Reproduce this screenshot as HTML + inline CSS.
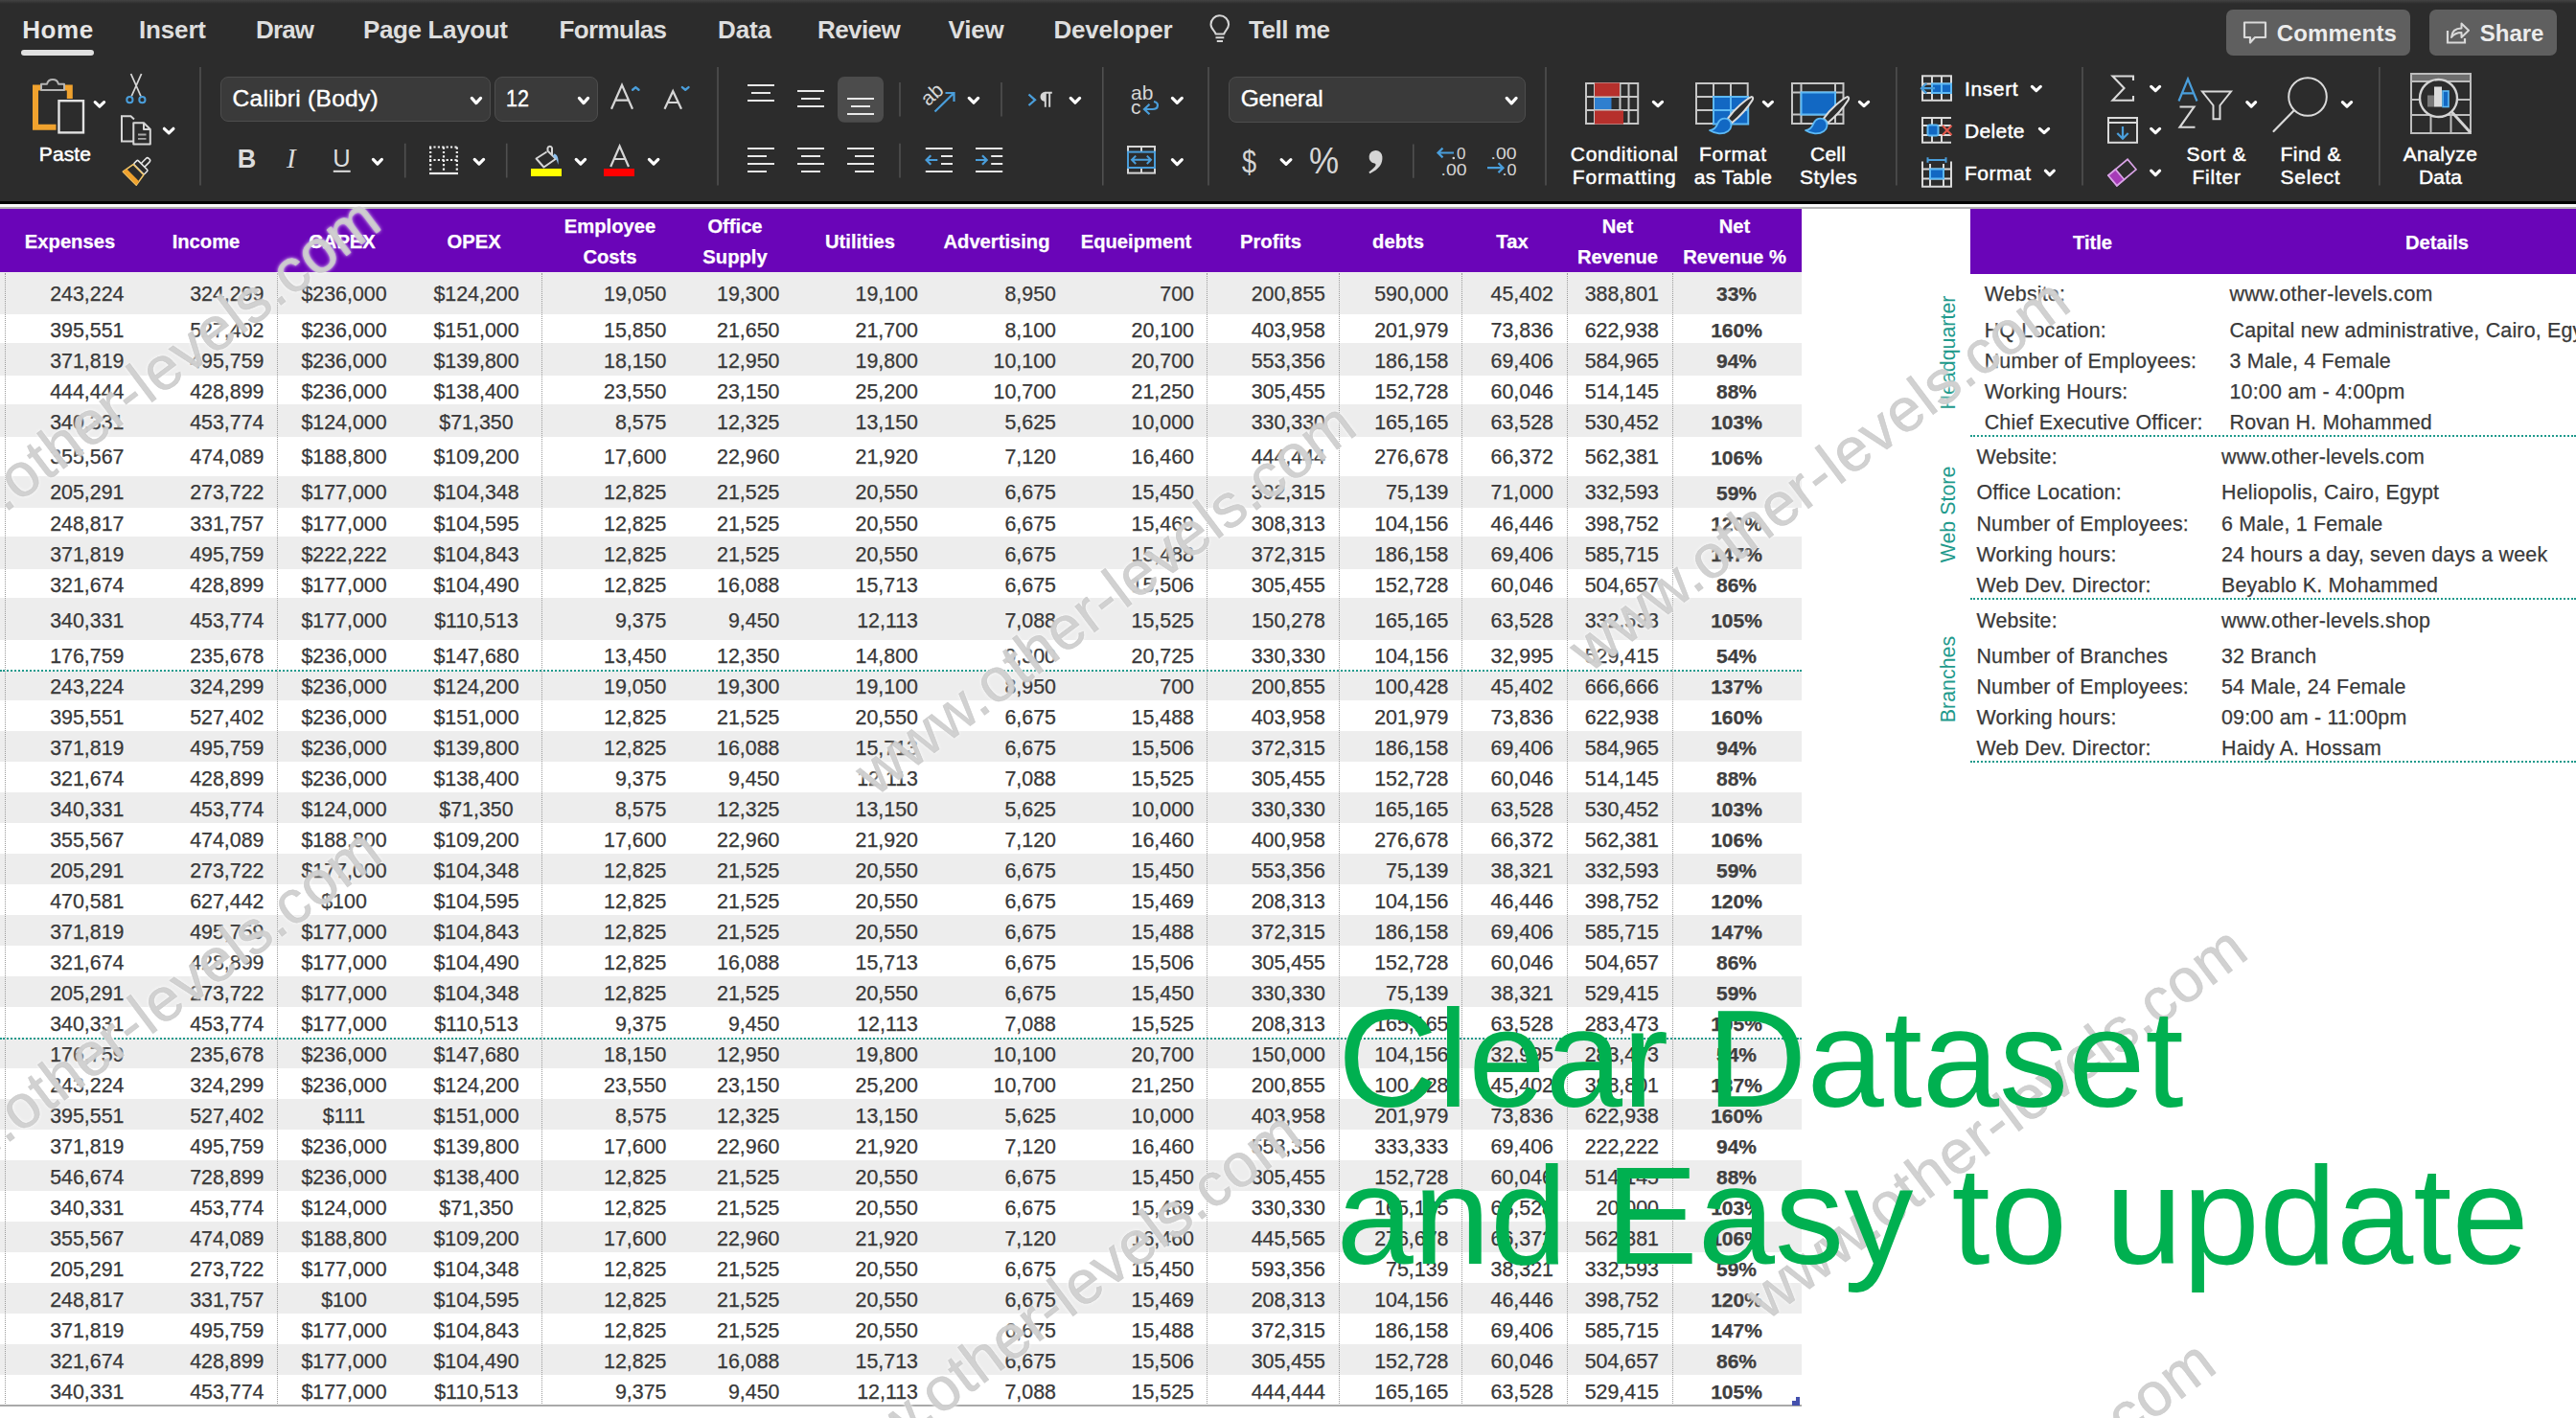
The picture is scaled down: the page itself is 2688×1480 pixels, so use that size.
<!DOCTYPE html>
<html><head><meta charset="utf-8"><title>Excel</title>
<style>
html,body{margin:0;padding:0;width:2688px;height:1480px;overflow:hidden}
#page{position:absolute;left:0;top:0;width:2688px;height:1480px;overflow:hidden;background:#fff}
body{width:2688px;height:1480px;overflow:hidden;position:relative;background:#fff;font-family:"Liberation Sans",sans-serif}
#sheet{position:absolute;left:0;top:0;width:2688px;height:1480px;overflow:hidden}

.ph{position:absolute;background:#6a05b8}
.ht{position:absolute;display:flex;align-items:center;justify-content:center;text-align:center;color:#fff;font-weight:bold;font-size:20.2px;line-height:32px;padding-top:2px;box-sizing:border-box;-webkit-text-stroke:0.25px #fff;white-space:nowrap}
.ht.h2 span{position:relative;top:0px}
.gs{position:absolute;left:0;width:1880px;background:#ededed}
.vd{position:absolute;top:285px;width:0;height:1182px;border-left:1px dotted #9a9a9a}
.td{position:absolute;height:0;border-top:2px dotted #1f9a8c}
.rw{position:absolute;left:0;width:1880px;font-size:21.4px;color:#383838;white-space:nowrap;-webkit-text-stroke:0.25px #383838}
.c{position:absolute;top:0.8px;height:100%}
.c.r{text-align:right}
.c.m{text-align:center}
.c.b{font-weight:bold;font-size:21px;color:#404040}
.rr{position:absolute;left:0;width:2688px;font-size:21.4px;color:#3a3a3a;white-space:nowrap;letter-spacing:0.2px;-webkit-text-stroke:0.25px #383838}
.rr span{position:absolute;top:0.8px}
.vl{position:absolute;width:200px;height:30px;line-height:30px;text-align:center;color:#1f9a8c;font-size:21.4px;transform:rotate(-90deg);white-space:nowrap}


#rb{position:absolute;left:0;top:0;width:2688px;height:218px;background:linear-gradient(#2c2c2c 0,#2c2c2c 209.6px,#000 209.6px,#000 212.6px,#fafafa 212.6px,#fafafa 216px,#b4b4b4 216px,#b4b4b4 218px);overflow:hidden}
#rb:before{content:"";position:absolute;left:0;top:0;width:100%;height:3.5px;background:linear-gradient(#424242,#2c2c2c)}
.rt{position:absolute;line-height:1;white-space:nowrap}
.bx{position:absolute;box-sizing:border-box;background:#3a3a3a;border:1.5px solid #4d4d4d;border-radius:8px}
.btn{position:absolute;background:#5f5f5f;border-radius:7px}


.big{position:absolute;font-size:144.4px;line-height:144.4px;color:#00b050;white-space:nowrap}
.wm{position:absolute;width:700px;height:90px;line-height:90px;text-align:center;font-size:64px;color:rgba(198,198,198,0.8);-webkit-text-stroke:0.6px rgba(198,198,198,0.8);white-space:nowrap;text-shadow:0 0 4px rgba(255,255,255,0.9),0 0 2px rgba(255,255,255,0.7);letter-spacing:0.53px}

</style></head><body>
<div id="page">
<div id="sheet">
<div class="ph" style="left:0;top:218px;width:1880px;height:66px"></div>
<div class="ht" style="left:-27.0px;top:218px;width:200px;height:66px"><span>Expenses</span></div>
<div class="ht" style="left:115.0px;top:218px;width:200px;height:66px"><span>Income</span></div>
<div class="ht" style="left:257.0px;top:218px;width:200px;height:66px"><span>CAPEX</span></div>
<div class="ht" style="left:394.6px;top:218px;width:200px;height:66px"><span>OPEX</span></div>
<div class="ht h2" style="left:536.5px;top:218px;width:200px;height:66px"><span>Employee<br>Costs</span></div>
<div class="ht h2" style="left:667.0px;top:218px;width:200px;height:66px"><span>Office<br>Supply</span></div>
<div class="ht" style="left:797.5px;top:218px;width:200px;height:66px"><span>Utilities</span></div>
<div class="ht" style="left:940.0px;top:218px;width:200px;height:66px"><span>Advertising</span></div>
<div class="ht" style="left:1085.5px;top:218px;width:200px;height:66px"><span>Equeipment</span></div>
<div class="ht" style="left:1226.0px;top:218px;width:200px;height:66px"><span>Profits</span></div>
<div class="ht" style="left:1359.0px;top:218px;width:200px;height:66px"><span>debts</span></div>
<div class="ht" style="left:1478.0px;top:218px;width:200px;height:66px"><span>Tax</span></div>
<div class="ht h2" style="left:1588.0px;top:218px;width:200px;height:66px"><span>Net<br>Revenue</span></div>
<div class="ht h2" style="left:1710.0px;top:218px;width:200px;height:66px"><span>Net<br>Revenue %</span></div>
<div class="gs" style="top:284.0px;height:43.7px"></div>
<div class="gs" style="top:358.0px;height:34.0px"></div>
<div class="gs" style="top:422.0px;height:33.7px"></div>
<div class="gs" style="top:496.7px;height:33.3px"></div>
<div class="gs" style="top:560.0px;height:34.0px"></div>
<div class="gs" style="top:624.0px;height:44.0px"></div>
<div class="gs" style="top:699.5px;height:31.9px"></div>
<div class="gs" style="top:762.6px;height:32.8px"></div>
<div class="gs" style="top:826.6px;height:32.8px"></div>
<div class="gs" style="top:890.6px;height:32.8px"></div>
<div class="gs" style="top:954.6px;height:32.8px"></div>
<div class="gs" style="top:1018.6px;height:32.8px"></div>
<div class="gs" style="top:1082.6px;height:32.8px"></div>
<div class="gs" style="top:1146.6px;height:32.8px"></div>
<div class="gs" style="top:1210.6px;height:32.8px"></div>
<div class="gs" style="top:1274.6px;height:32.8px"></div>
<div class="gs" style="top:1338.6px;height:32.8px"></div>
<div class="gs" style="top:1402.6px;height:32.8px"></div>
<div class="vd" style="left:5px"></div>
<div class="vd" style="left:289px"></div>
<div class="vd" style="left:565px"></div>
<div class="vd" style="left:1259px"></div>
<div class="vd" style="left:1397px"></div>
<div class="vd" style="left:1525px"></div>
<div class="vd" style="left:1635px"></div>
<div class="vd" style="left:1745px"></div>
<div class="td" style="left:0;top:699px;width:1880px"></div>
<div class="td" style="left:0;top:1083px;width:1880px"></div>
<div style="position:absolute;left:0;top:1466px;width:1880px;height:2px;background:#a9a9a9"></div>
<div style="position:absolute;left:1874px;top:1458px;width:4px;height:8.5px;background:#4450ad"></div><div style="position:absolute;left:1870px;top:1462px;width:8px;height:4.5px;background:#4450ad"></div>
<div class="rw" style="top:284px;height:44px;line-height:44px">
<span class="c r" style="left:-10.5px;width:140px">243,224</span>
<span class="c r" style="left:135.5px;width:140px">324,299</span>
<span class="c m" style="left:289px;width:140px">$236,000</span>
<span class="c m" style="left:427px;width:140px">$124,200</span>
<span class="c r" style="left:555.5px;width:140px">19,050</span>
<span class="c r" style="left:673.5px;width:140px">19,300</span>
<span class="c r" style="left:818px;width:140px">19,100</span>
<span class="c r" style="left:962px;width:140px">8,950</span>
<span class="c r" style="left:1106px;width:140px">700</span>
<span class="c r" style="left:1243px;width:140px">200,855</span>
<span class="c r" style="left:1371.5px;width:140px">590,000</span>
<span class="c r" style="left:1481px;width:140px">45,402</span>
<span class="c r" style="left:1591px;width:140px">388,801</span>
<span class="c m b" style="left:1742px;width:140px">33%</span>
</div>
<div class="rw" style="top:328px;height:32px;line-height:32px">
<span class="c r" style="left:-10.5px;width:140px">395,551</span>
<span class="c r" style="left:135.5px;width:140px">527,402</span>
<span class="c m" style="left:289px;width:140px">$236,000</span>
<span class="c m" style="left:427px;width:140px">$151,000</span>
<span class="c r" style="left:555.5px;width:140px">15,850</span>
<span class="c r" style="left:673.5px;width:140px">21,650</span>
<span class="c r" style="left:818px;width:140px">21,700</span>
<span class="c r" style="left:962px;width:140px">8,100</span>
<span class="c r" style="left:1106px;width:140px">20,100</span>
<span class="c r" style="left:1243px;width:140px">403,958</span>
<span class="c r" style="left:1371.5px;width:140px">201,979</span>
<span class="c r" style="left:1481px;width:140px">73,836</span>
<span class="c r" style="left:1591px;width:140px">622,938</span>
<span class="c m b" style="left:1742px;width:140px">160%</span>
</div>
<div class="rw" style="top:360px;height:32px;line-height:32px">
<span class="c r" style="left:-10.5px;width:140px">371,819</span>
<span class="c r" style="left:135.5px;width:140px">495,759</span>
<span class="c m" style="left:289px;width:140px">$236,000</span>
<span class="c m" style="left:427px;width:140px">$139,800</span>
<span class="c r" style="left:555.5px;width:140px">18,150</span>
<span class="c r" style="left:673.5px;width:140px">12,950</span>
<span class="c r" style="left:818px;width:140px">19,800</span>
<span class="c r" style="left:962px;width:140px">10,100</span>
<span class="c r" style="left:1106px;width:140px">20,700</span>
<span class="c r" style="left:1243px;width:140px">553,356</span>
<span class="c r" style="left:1371.5px;width:140px">186,158</span>
<span class="c r" style="left:1481px;width:140px">69,406</span>
<span class="c r" style="left:1591px;width:140px">584,965</span>
<span class="c m b" style="left:1742px;width:140px">94%</span>
</div>
<div class="rw" style="top:392px;height:32px;line-height:32px">
<span class="c r" style="left:-10.5px;width:140px">444,444</span>
<span class="c r" style="left:135.5px;width:140px">428,899</span>
<span class="c m" style="left:289px;width:140px">$236,000</span>
<span class="c m" style="left:427px;width:140px">$138,400</span>
<span class="c r" style="left:555.5px;width:140px">23,550</span>
<span class="c r" style="left:673.5px;width:140px">23,150</span>
<span class="c r" style="left:818px;width:140px">25,200</span>
<span class="c r" style="left:962px;width:140px">10,700</span>
<span class="c r" style="left:1106px;width:140px">21,250</span>
<span class="c r" style="left:1243px;width:140px">305,455</span>
<span class="c r" style="left:1371.5px;width:140px">152,728</span>
<span class="c r" style="left:1481px;width:140px">60,046</span>
<span class="c r" style="left:1591px;width:140px">514,145</span>
<span class="c m b" style="left:1742px;width:140px">88%</span>
</div>
<div class="rw" style="top:424px;height:32px;line-height:32px">
<span class="c r" style="left:-10.5px;width:140px">340,331</span>
<span class="c r" style="left:135.5px;width:140px">453,774</span>
<span class="c m" style="left:289px;width:140px">$124,000</span>
<span class="c m" style="left:427px;width:140px">$71,350</span>
<span class="c r" style="left:555.5px;width:140px">8,575</span>
<span class="c r" style="left:673.5px;width:140px">12,325</span>
<span class="c r" style="left:818px;width:140px">13,150</span>
<span class="c r" style="left:962px;width:140px">5,625</span>
<span class="c r" style="left:1106px;width:140px">10,000</span>
<span class="c r" style="left:1243px;width:140px">330,330</span>
<span class="c r" style="left:1371.5px;width:140px">165,165</span>
<span class="c r" style="left:1481px;width:140px">63,528</span>
<span class="c r" style="left:1591px;width:140px">530,452</span>
<span class="c m b" style="left:1742px;width:140px">103%</span>
</div>
<div class="rw" style="top:456px;height:41px;line-height:41px">
<span class="c r" style="left:-10.5px;width:140px">355,567</span>
<span class="c r" style="left:135.5px;width:140px">474,089</span>
<span class="c m" style="left:289px;width:140px">$188,800</span>
<span class="c m" style="left:427px;width:140px">$109,200</span>
<span class="c r" style="left:555.5px;width:140px">17,600</span>
<span class="c r" style="left:673.5px;width:140px">22,960</span>
<span class="c r" style="left:818px;width:140px">21,920</span>
<span class="c r" style="left:962px;width:140px">7,120</span>
<span class="c r" style="left:1106px;width:140px">16,460</span>
<span class="c r" style="left:1243px;width:140px">444,444</span>
<span class="c r" style="left:1371.5px;width:140px">276,678</span>
<span class="c r" style="left:1481px;width:140px">66,372</span>
<span class="c r" style="left:1591px;width:140px">562,381</span>
<span class="c m b" style="left:1742px;width:140px">106%</span>
</div>
<div class="rw" style="top:497px;height:33px;line-height:33px">
<span class="c r" style="left:-10.5px;width:140px">205,291</span>
<span class="c r" style="left:135.5px;width:140px">273,722</span>
<span class="c m" style="left:289px;width:140px">$177,000</span>
<span class="c m" style="left:427px;width:140px">$104,348</span>
<span class="c r" style="left:555.5px;width:140px">12,825</span>
<span class="c r" style="left:673.5px;width:140px">21,525</span>
<span class="c r" style="left:818px;width:140px">20,550</span>
<span class="c r" style="left:962px;width:140px">6,675</span>
<span class="c r" style="left:1106px;width:140px">15,450</span>
<span class="c r" style="left:1243px;width:140px">392,315</span>
<span class="c r" style="left:1371.5px;width:140px">75,139</span>
<span class="c r" style="left:1481px;width:140px">71,000</span>
<span class="c r" style="left:1591px;width:140px">332,593</span>
<span class="c m b" style="left:1742px;width:140px">59%</span>
</div>
<div class="rw" style="top:530px;height:32px;line-height:32px">
<span class="c r" style="left:-10.5px;width:140px">248,817</span>
<span class="c r" style="left:135.5px;width:140px">331,757</span>
<span class="c m" style="left:289px;width:140px">$177,000</span>
<span class="c m" style="left:427px;width:140px">$104,595</span>
<span class="c r" style="left:555.5px;width:140px">12,825</span>
<span class="c r" style="left:673.5px;width:140px">21,525</span>
<span class="c r" style="left:818px;width:140px">20,550</span>
<span class="c r" style="left:962px;width:140px">6,675</span>
<span class="c r" style="left:1106px;width:140px">15,469</span>
<span class="c r" style="left:1243px;width:140px">308,313</span>
<span class="c r" style="left:1371.5px;width:140px">104,156</span>
<span class="c r" style="left:1481px;width:140px">46,446</span>
<span class="c r" style="left:1591px;width:140px">398,752</span>
<span class="c m b" style="left:1742px;width:140px">120%</span>
</div>
<div class="rw" style="top:562px;height:32px;line-height:32px">
<span class="c r" style="left:-10.5px;width:140px">371,819</span>
<span class="c r" style="left:135.5px;width:140px">495,759</span>
<span class="c m" style="left:289px;width:140px">$222,222</span>
<span class="c m" style="left:427px;width:140px">$104,843</span>
<span class="c r" style="left:555.5px;width:140px">12,825</span>
<span class="c r" style="left:673.5px;width:140px">21,525</span>
<span class="c r" style="left:818px;width:140px">20,550</span>
<span class="c r" style="left:962px;width:140px">6,675</span>
<span class="c r" style="left:1106px;width:140px">15,488</span>
<span class="c r" style="left:1243px;width:140px">372,315</span>
<span class="c r" style="left:1371.5px;width:140px">186,158</span>
<span class="c r" style="left:1481px;width:140px">69,406</span>
<span class="c r" style="left:1591px;width:140px">585,715</span>
<span class="c m b" style="left:1742px;width:140px">147%</span>
</div>
<div class="rw" style="top:594px;height:32px;line-height:32px">
<span class="c r" style="left:-10.5px;width:140px">321,674</span>
<span class="c r" style="left:135.5px;width:140px">428,899</span>
<span class="c m" style="left:289px;width:140px">$177,000</span>
<span class="c m" style="left:427px;width:140px">$104,490</span>
<span class="c r" style="left:555.5px;width:140px">12,825</span>
<span class="c r" style="left:673.5px;width:140px">16,088</span>
<span class="c r" style="left:818px;width:140px">15,713</span>
<span class="c r" style="left:962px;width:140px">6,675</span>
<span class="c r" style="left:1106px;width:140px">15,506</span>
<span class="c r" style="left:1243px;width:140px">305,455</span>
<span class="c r" style="left:1371.5px;width:140px">152,728</span>
<span class="c r" style="left:1481px;width:140px">60,046</span>
<span class="c r" style="left:1591px;width:140px">504,657</span>
<span class="c m b" style="left:1742px;width:140px">86%</span>
</div>
<div class="rw" style="top:626px;height:42px;line-height:42px">
<span class="c r" style="left:-10.5px;width:140px">340,331</span>
<span class="c r" style="left:135.5px;width:140px">453,774</span>
<span class="c m" style="left:289px;width:140px">$177,000</span>
<span class="c m" style="left:427px;width:140px">$110,513</span>
<span class="c r" style="left:555.5px;width:140px">9,375</span>
<span class="c r" style="left:673.5px;width:140px">9,450</span>
<span class="c r" style="left:818px;width:140px">12,113</span>
<span class="c r" style="left:962px;width:140px">7,088</span>
<span class="c r" style="left:1106px;width:140px">15,525</span>
<span class="c r" style="left:1243px;width:140px">150,278</span>
<span class="c r" style="left:1371.5px;width:140px">165,165</span>
<span class="c r" style="left:1481px;width:140px">63,528</span>
<span class="c r" style="left:1591px;width:140px">332,593</span>
<span class="c m b" style="left:1742px;width:140px">105%</span>
</div>
<div class="rw" style="top:668px;height:32px;line-height:32px">
<span class="c r" style="left:-10.5px;width:140px">176,759</span>
<span class="c r" style="left:135.5px;width:140px">235,678</span>
<span class="c m" style="left:289px;width:140px">$236,000</span>
<span class="c m" style="left:427px;width:140px">$147,680</span>
<span class="c r" style="left:555.5px;width:140px">13,450</span>
<span class="c r" style="left:673.5px;width:140px">12,350</span>
<span class="c r" style="left:818px;width:140px">14,800</span>
<span class="c r" style="left:962px;width:140px">9,300</span>
<span class="c r" style="left:1106px;width:140px">20,725</span>
<span class="c r" style="left:1243px;width:140px">330,330</span>
<span class="c r" style="left:1371.5px;width:140px">104,156</span>
<span class="c r" style="left:1481px;width:140px">32,995</span>
<span class="c r" style="left:1591px;width:140px">529,415</span>
<span class="c m b" style="left:1742px;width:140px">54%</span>
</div>
<div class="rw" style="top:700px;height:32px;line-height:32px">
<span class="c r" style="left:-10.5px;width:140px">243,224</span>
<span class="c r" style="left:135.5px;width:140px">324,299</span>
<span class="c m" style="left:289px;width:140px">$236,000</span>
<span class="c m" style="left:427px;width:140px">$124,200</span>
<span class="c r" style="left:555.5px;width:140px">19,050</span>
<span class="c r" style="left:673.5px;width:140px">19,300</span>
<span class="c r" style="left:818px;width:140px">19,100</span>
<span class="c r" style="left:962px;width:140px">8,950</span>
<span class="c r" style="left:1106px;width:140px">700</span>
<span class="c r" style="left:1243px;width:140px">200,855</span>
<span class="c r" style="left:1371.5px;width:140px">100,428</span>
<span class="c r" style="left:1481px;width:140px">45,402</span>
<span class="c r" style="left:1591px;width:140px">666,666</span>
<span class="c m b" style="left:1742px;width:140px">137%</span>
</div>
<div class="rw" style="top:732px;height:32px;line-height:32px">
<span class="c r" style="left:-10.5px;width:140px">395,551</span>
<span class="c r" style="left:135.5px;width:140px">527,402</span>
<span class="c m" style="left:289px;width:140px">$236,000</span>
<span class="c m" style="left:427px;width:140px">$151,000</span>
<span class="c r" style="left:555.5px;width:140px">12,825</span>
<span class="c r" style="left:673.5px;width:140px">21,525</span>
<span class="c r" style="left:818px;width:140px">20,550</span>
<span class="c r" style="left:962px;width:140px">6,675</span>
<span class="c r" style="left:1106px;width:140px">15,488</span>
<span class="c r" style="left:1243px;width:140px">403,958</span>
<span class="c r" style="left:1371.5px;width:140px">201,979</span>
<span class="c r" style="left:1481px;width:140px">73,836</span>
<span class="c r" style="left:1591px;width:140px">622,938</span>
<span class="c m b" style="left:1742px;width:140px">160%</span>
</div>
<div class="rw" style="top:764px;height:32px;line-height:32px">
<span class="c r" style="left:-10.5px;width:140px">371,819</span>
<span class="c r" style="left:135.5px;width:140px">495,759</span>
<span class="c m" style="left:289px;width:140px">$236,000</span>
<span class="c m" style="left:427px;width:140px">$139,800</span>
<span class="c r" style="left:555.5px;width:140px">12,825</span>
<span class="c r" style="left:673.5px;width:140px">16,088</span>
<span class="c r" style="left:818px;width:140px">15,713</span>
<span class="c r" style="left:962px;width:140px">6,675</span>
<span class="c r" style="left:1106px;width:140px">15,506</span>
<span class="c r" style="left:1243px;width:140px">372,315</span>
<span class="c r" style="left:1371.5px;width:140px">186,158</span>
<span class="c r" style="left:1481px;width:140px">69,406</span>
<span class="c r" style="left:1591px;width:140px">584,965</span>
<span class="c m b" style="left:1742px;width:140px">94%</span>
</div>
<div class="rw" style="top:796px;height:32px;line-height:32px">
<span class="c r" style="left:-10.5px;width:140px">321,674</span>
<span class="c r" style="left:135.5px;width:140px">428,899</span>
<span class="c m" style="left:289px;width:140px">$236,000</span>
<span class="c m" style="left:427px;width:140px">$138,400</span>
<span class="c r" style="left:555.5px;width:140px">9,375</span>
<span class="c r" style="left:673.5px;width:140px">9,450</span>
<span class="c r" style="left:818px;width:140px">12,113</span>
<span class="c r" style="left:962px;width:140px">7,088</span>
<span class="c r" style="left:1106px;width:140px">15,525</span>
<span class="c r" style="left:1243px;width:140px">305,455</span>
<span class="c r" style="left:1371.5px;width:140px">152,728</span>
<span class="c r" style="left:1481px;width:140px">60,046</span>
<span class="c r" style="left:1591px;width:140px">514,145</span>
<span class="c m b" style="left:1742px;width:140px">88%</span>
</div>
<div class="rw" style="top:828px;height:32px;line-height:32px">
<span class="c r" style="left:-10.5px;width:140px">340,331</span>
<span class="c r" style="left:135.5px;width:140px">453,774</span>
<span class="c m" style="left:289px;width:140px">$124,000</span>
<span class="c m" style="left:427px;width:140px">$71,350</span>
<span class="c r" style="left:555.5px;width:140px">8,575</span>
<span class="c r" style="left:673.5px;width:140px">12,325</span>
<span class="c r" style="left:818px;width:140px">13,150</span>
<span class="c r" style="left:962px;width:140px">5,625</span>
<span class="c r" style="left:1106px;width:140px">10,000</span>
<span class="c r" style="left:1243px;width:140px">330,330</span>
<span class="c r" style="left:1371.5px;width:140px">165,165</span>
<span class="c r" style="left:1481px;width:140px">63,528</span>
<span class="c r" style="left:1591px;width:140px">530,452</span>
<span class="c m b" style="left:1742px;width:140px">103%</span>
</div>
<div class="rw" style="top:860px;height:32px;line-height:32px">
<span class="c r" style="left:-10.5px;width:140px">355,567</span>
<span class="c r" style="left:135.5px;width:140px">474,089</span>
<span class="c m" style="left:289px;width:140px">$188,800</span>
<span class="c m" style="left:427px;width:140px">$109,200</span>
<span class="c r" style="left:555.5px;width:140px">17,600</span>
<span class="c r" style="left:673.5px;width:140px">22,960</span>
<span class="c r" style="left:818px;width:140px">21,920</span>
<span class="c r" style="left:962px;width:140px">7,120</span>
<span class="c r" style="left:1106px;width:140px">16,460</span>
<span class="c r" style="left:1243px;width:140px">400,958</span>
<span class="c r" style="left:1371.5px;width:140px">276,678</span>
<span class="c r" style="left:1481px;width:140px">66,372</span>
<span class="c r" style="left:1591px;width:140px">562,381</span>
<span class="c m b" style="left:1742px;width:140px">106%</span>
</div>
<div class="rw" style="top:892px;height:32px;line-height:32px">
<span class="c r" style="left:-10.5px;width:140px">205,291</span>
<span class="c r" style="left:135.5px;width:140px">273,722</span>
<span class="c m" style="left:289px;width:140px">$177,000</span>
<span class="c m" style="left:427px;width:140px">$104,348</span>
<span class="c r" style="left:555.5px;width:140px">12,825</span>
<span class="c r" style="left:673.5px;width:140px">21,525</span>
<span class="c r" style="left:818px;width:140px">20,550</span>
<span class="c r" style="left:962px;width:140px">6,675</span>
<span class="c r" style="left:1106px;width:140px">15,450</span>
<span class="c r" style="left:1243px;width:140px">553,356</span>
<span class="c r" style="left:1371.5px;width:140px">75,139</span>
<span class="c r" style="left:1481px;width:140px">38,321</span>
<span class="c r" style="left:1591px;width:140px">332,593</span>
<span class="c m b" style="left:1742px;width:140px">59%</span>
</div>
<div class="rw" style="top:924px;height:32px;line-height:32px">
<span class="c r" style="left:-10.5px;width:140px">470,581</span>
<span class="c r" style="left:135.5px;width:140px">627,442</span>
<span class="c m" style="left:289px;width:140px">$100</span>
<span class="c m" style="left:427px;width:140px">$104,595</span>
<span class="c r" style="left:555.5px;width:140px">12,825</span>
<span class="c r" style="left:673.5px;width:140px">21,525</span>
<span class="c r" style="left:818px;width:140px">20,550</span>
<span class="c r" style="left:962px;width:140px">6,675</span>
<span class="c r" style="left:1106px;width:140px">15,469</span>
<span class="c r" style="left:1243px;width:140px">208,313</span>
<span class="c r" style="left:1371.5px;width:140px">104,156</span>
<span class="c r" style="left:1481px;width:140px">46,446</span>
<span class="c r" style="left:1591px;width:140px">398,752</span>
<span class="c m b" style="left:1742px;width:140px">120%</span>
</div>
<div class="rw" style="top:956px;height:32px;line-height:32px">
<span class="c r" style="left:-10.5px;width:140px">371,819</span>
<span class="c r" style="left:135.5px;width:140px">495,759</span>
<span class="c m" style="left:289px;width:140px">$177,000</span>
<span class="c m" style="left:427px;width:140px">$104,843</span>
<span class="c r" style="left:555.5px;width:140px">12,825</span>
<span class="c r" style="left:673.5px;width:140px">21,525</span>
<span class="c r" style="left:818px;width:140px">20,550</span>
<span class="c r" style="left:962px;width:140px">6,675</span>
<span class="c r" style="left:1106px;width:140px">15,488</span>
<span class="c r" style="left:1243px;width:140px">372,315</span>
<span class="c r" style="left:1371.5px;width:140px">186,158</span>
<span class="c r" style="left:1481px;width:140px">69,406</span>
<span class="c r" style="left:1591px;width:140px">585,715</span>
<span class="c m b" style="left:1742px;width:140px">147%</span>
</div>
<div class="rw" style="top:988px;height:32px;line-height:32px">
<span class="c r" style="left:-10.5px;width:140px">321,674</span>
<span class="c r" style="left:135.5px;width:140px">428,899</span>
<span class="c m" style="left:289px;width:140px">$177,000</span>
<span class="c m" style="left:427px;width:140px">$104,490</span>
<span class="c r" style="left:555.5px;width:140px">12,825</span>
<span class="c r" style="left:673.5px;width:140px">16,088</span>
<span class="c r" style="left:818px;width:140px">15,713</span>
<span class="c r" style="left:962px;width:140px">6,675</span>
<span class="c r" style="left:1106px;width:140px">15,506</span>
<span class="c r" style="left:1243px;width:140px">305,455</span>
<span class="c r" style="left:1371.5px;width:140px">152,728</span>
<span class="c r" style="left:1481px;width:140px">60,046</span>
<span class="c r" style="left:1591px;width:140px">504,657</span>
<span class="c m b" style="left:1742px;width:140px">86%</span>
</div>
<div class="rw" style="top:1020px;height:32px;line-height:32px">
<span class="c r" style="left:-10.5px;width:140px">205,291</span>
<span class="c r" style="left:135.5px;width:140px">273,722</span>
<span class="c m" style="left:289px;width:140px">$177,000</span>
<span class="c m" style="left:427px;width:140px">$104,348</span>
<span class="c r" style="left:555.5px;width:140px">12,825</span>
<span class="c r" style="left:673.5px;width:140px">21,525</span>
<span class="c r" style="left:818px;width:140px">20,550</span>
<span class="c r" style="left:962px;width:140px">6,675</span>
<span class="c r" style="left:1106px;width:140px">15,450</span>
<span class="c r" style="left:1243px;width:140px">330,330</span>
<span class="c r" style="left:1371.5px;width:140px">75,139</span>
<span class="c r" style="left:1481px;width:140px">38,321</span>
<span class="c r" style="left:1591px;width:140px">529,415</span>
<span class="c m b" style="left:1742px;width:140px">59%</span>
</div>
<div class="rw" style="top:1052px;height:32px;line-height:32px">
<span class="c r" style="left:-10.5px;width:140px">340,331</span>
<span class="c r" style="left:135.5px;width:140px">453,774</span>
<span class="c m" style="left:289px;width:140px">$177,000</span>
<span class="c m" style="left:427px;width:140px">$110,513</span>
<span class="c r" style="left:555.5px;width:140px">9,375</span>
<span class="c r" style="left:673.5px;width:140px">9,450</span>
<span class="c r" style="left:818px;width:140px">12,113</span>
<span class="c r" style="left:962px;width:140px">7,088</span>
<span class="c r" style="left:1106px;width:140px">15,525</span>
<span class="c r" style="left:1243px;width:140px">208,313</span>
<span class="c r" style="left:1371.5px;width:140px">165,165</span>
<span class="c r" style="left:1481px;width:140px">63,528</span>
<span class="c r" style="left:1591px;width:140px">283,473</span>
<span class="c m b" style="left:1742px;width:140px">105%</span>
</div>
<div class="rw" style="top:1084px;height:32px;line-height:32px">
<span class="c r" style="left:-10.5px;width:140px">176,759</span>
<span class="c r" style="left:135.5px;width:140px">235,678</span>
<span class="c m" style="left:289px;width:140px">$236,000</span>
<span class="c m" style="left:427px;width:140px">$147,680</span>
<span class="c r" style="left:555.5px;width:140px">18,150</span>
<span class="c r" style="left:673.5px;width:140px">12,950</span>
<span class="c r" style="left:818px;width:140px">19,800</span>
<span class="c r" style="left:962px;width:140px">10,100</span>
<span class="c r" style="left:1106px;width:140px">20,700</span>
<span class="c r" style="left:1243px;width:140px">150,000</span>
<span class="c r" style="left:1371.5px;width:140px">104,156</span>
<span class="c r" style="left:1481px;width:140px">32,995</span>
<span class="c r" style="left:1591px;width:140px">283,473</span>
<span class="c m b" style="left:1742px;width:140px">54%</span>
</div>
<div class="rw" style="top:1116px;height:32px;line-height:32px">
<span class="c r" style="left:-10.5px;width:140px">243,224</span>
<span class="c r" style="left:135.5px;width:140px">324,299</span>
<span class="c m" style="left:289px;width:140px">$236,000</span>
<span class="c m" style="left:427px;width:140px">$124,200</span>
<span class="c r" style="left:555.5px;width:140px">23,550</span>
<span class="c r" style="left:673.5px;width:140px">23,150</span>
<span class="c r" style="left:818px;width:140px">25,200</span>
<span class="c r" style="left:962px;width:140px">10,700</span>
<span class="c r" style="left:1106px;width:140px">21,250</span>
<span class="c r" style="left:1243px;width:140px">200,855</span>
<span class="c r" style="left:1371.5px;width:140px">100,428</span>
<span class="c r" style="left:1481px;width:140px">45,402</span>
<span class="c r" style="left:1591px;width:140px">388,801</span>
<span class="c m b" style="left:1742px;width:140px">137%</span>
</div>
<div class="rw" style="top:1148px;height:32px;line-height:32px">
<span class="c r" style="left:-10.5px;width:140px">395,551</span>
<span class="c r" style="left:135.5px;width:140px">527,402</span>
<span class="c m" style="left:289px;width:140px">$111</span>
<span class="c m" style="left:427px;width:140px">$151,000</span>
<span class="c r" style="left:555.5px;width:140px">8,575</span>
<span class="c r" style="left:673.5px;width:140px">12,325</span>
<span class="c r" style="left:818px;width:140px">13,150</span>
<span class="c r" style="left:962px;width:140px">5,625</span>
<span class="c r" style="left:1106px;width:140px">10,000</span>
<span class="c r" style="left:1243px;width:140px">403,958</span>
<span class="c r" style="left:1371.5px;width:140px">201,979</span>
<span class="c r" style="left:1481px;width:140px">73,836</span>
<span class="c r" style="left:1591px;width:140px">622,938</span>
<span class="c m b" style="left:1742px;width:140px">160%</span>
</div>
<div class="rw" style="top:1180px;height:32px;line-height:32px">
<span class="c r" style="left:-10.5px;width:140px">371,819</span>
<span class="c r" style="left:135.5px;width:140px">495,759</span>
<span class="c m" style="left:289px;width:140px">$236,000</span>
<span class="c m" style="left:427px;width:140px">$139,800</span>
<span class="c r" style="left:555.5px;width:140px">17,600</span>
<span class="c r" style="left:673.5px;width:140px">22,960</span>
<span class="c r" style="left:818px;width:140px">21,920</span>
<span class="c r" style="left:962px;width:140px">7,120</span>
<span class="c r" style="left:1106px;width:140px">16,460</span>
<span class="c r" style="left:1243px;width:140px">553,356</span>
<span class="c r" style="left:1371.5px;width:140px">333,333</span>
<span class="c r" style="left:1481px;width:140px">69,406</span>
<span class="c r" style="left:1591px;width:140px">222,222</span>
<span class="c m b" style="left:1742px;width:140px">94%</span>
</div>
<div class="rw" style="top:1212px;height:32px;line-height:32px">
<span class="c r" style="left:-10.5px;width:140px">546,674</span>
<span class="c r" style="left:135.5px;width:140px">728,899</span>
<span class="c m" style="left:289px;width:140px">$236,000</span>
<span class="c m" style="left:427px;width:140px">$138,400</span>
<span class="c r" style="left:555.5px;width:140px">12,825</span>
<span class="c r" style="left:673.5px;width:140px">21,525</span>
<span class="c r" style="left:818px;width:140px">20,550</span>
<span class="c r" style="left:962px;width:140px">6,675</span>
<span class="c r" style="left:1106px;width:140px">15,450</span>
<span class="c r" style="left:1243px;width:140px">305,455</span>
<span class="c r" style="left:1371.5px;width:140px">152,728</span>
<span class="c r" style="left:1481px;width:140px">60,046</span>
<span class="c r" style="left:1591px;width:140px">514,145</span>
<span class="c m b" style="left:1742px;width:140px">88%</span>
</div>
<div class="rw" style="top:1244px;height:32px;line-height:32px">
<span class="c r" style="left:-10.5px;width:140px">340,331</span>
<span class="c r" style="left:135.5px;width:140px">453,774</span>
<span class="c m" style="left:289px;width:140px">$124,000</span>
<span class="c m" style="left:427px;width:140px">$71,350</span>
<span class="c r" style="left:555.5px;width:140px">12,825</span>
<span class="c r" style="left:673.5px;width:140px">21,525</span>
<span class="c r" style="left:818px;width:140px">20,550</span>
<span class="c r" style="left:962px;width:140px">6,675</span>
<span class="c r" style="left:1106px;width:140px">15,469</span>
<span class="c r" style="left:1243px;width:140px">330,330</span>
<span class="c r" style="left:1371.5px;width:140px">165,165</span>
<span class="c r" style="left:1481px;width:140px">63,528</span>
<span class="c r" style="left:1591px;width:140px">20,000</span>
<span class="c m b" style="left:1742px;width:140px">103%</span>
</div>
<div class="rw" style="top:1276px;height:32px;line-height:32px">
<span class="c r" style="left:-10.5px;width:140px">355,567</span>
<span class="c r" style="left:135.5px;width:140px">474,089</span>
<span class="c m" style="left:289px;width:140px">$188,800</span>
<span class="c m" style="left:427px;width:140px">$109,200</span>
<span class="c r" style="left:555.5px;width:140px">17,600</span>
<span class="c r" style="left:673.5px;width:140px">22,960</span>
<span class="c r" style="left:818px;width:140px">21,920</span>
<span class="c r" style="left:962px;width:140px">7,120</span>
<span class="c r" style="left:1106px;width:140px">16,460</span>
<span class="c r" style="left:1243px;width:140px">445,565</span>
<span class="c r" style="left:1371.5px;width:140px">276,678</span>
<span class="c r" style="left:1481px;width:140px">66,372</span>
<span class="c r" style="left:1591px;width:140px">562,381</span>
<span class="c m b" style="left:1742px;width:140px">106%</span>
</div>
<div class="rw" style="top:1308px;height:32px;line-height:32px">
<span class="c r" style="left:-10.5px;width:140px">205,291</span>
<span class="c r" style="left:135.5px;width:140px">273,722</span>
<span class="c m" style="left:289px;width:140px">$177,000</span>
<span class="c m" style="left:427px;width:140px">$104,348</span>
<span class="c r" style="left:555.5px;width:140px">12,825</span>
<span class="c r" style="left:673.5px;width:140px">21,525</span>
<span class="c r" style="left:818px;width:140px">20,550</span>
<span class="c r" style="left:962px;width:140px">6,675</span>
<span class="c r" style="left:1106px;width:140px">15,450</span>
<span class="c r" style="left:1243px;width:140px">593,356</span>
<span class="c r" style="left:1371.5px;width:140px">75,139</span>
<span class="c r" style="left:1481px;width:140px">38,321</span>
<span class="c r" style="left:1591px;width:140px">332,593</span>
<span class="c m b" style="left:1742px;width:140px">59%</span>
</div>
<div class="rw" style="top:1340px;height:32px;line-height:32px">
<span class="c r" style="left:-10.5px;width:140px">248,817</span>
<span class="c r" style="left:135.5px;width:140px">331,757</span>
<span class="c m" style="left:289px;width:140px">$100</span>
<span class="c m" style="left:427px;width:140px">$104,595</span>
<span class="c r" style="left:555.5px;width:140px">12,825</span>
<span class="c r" style="left:673.5px;width:140px">21,525</span>
<span class="c r" style="left:818px;width:140px">20,550</span>
<span class="c r" style="left:962px;width:140px">6,675</span>
<span class="c r" style="left:1106px;width:140px">15,469</span>
<span class="c r" style="left:1243px;width:140px">208,313</span>
<span class="c r" style="left:1371.5px;width:140px">104,156</span>
<span class="c r" style="left:1481px;width:140px">46,446</span>
<span class="c r" style="left:1591px;width:140px">398,752</span>
<span class="c m b" style="left:1742px;width:140px">120%</span>
</div>
<div class="rw" style="top:1372px;height:32px;line-height:32px">
<span class="c r" style="left:-10.5px;width:140px">371,819</span>
<span class="c r" style="left:135.5px;width:140px">495,759</span>
<span class="c m" style="left:289px;width:140px">$177,000</span>
<span class="c m" style="left:427px;width:140px">$104,843</span>
<span class="c r" style="left:555.5px;width:140px">12,825</span>
<span class="c r" style="left:673.5px;width:140px">21,525</span>
<span class="c r" style="left:818px;width:140px">20,550</span>
<span class="c r" style="left:962px;width:140px">6,675</span>
<span class="c r" style="left:1106px;width:140px">15,488</span>
<span class="c r" style="left:1243px;width:140px">372,315</span>
<span class="c r" style="left:1371.5px;width:140px">186,158</span>
<span class="c r" style="left:1481px;width:140px">69,406</span>
<span class="c r" style="left:1591px;width:140px">585,715</span>
<span class="c m b" style="left:1742px;width:140px">147%</span>
</div>
<div class="rw" style="top:1404px;height:32px;line-height:32px">
<span class="c r" style="left:-10.5px;width:140px">321,674</span>
<span class="c r" style="left:135.5px;width:140px">428,899</span>
<span class="c m" style="left:289px;width:140px">$177,000</span>
<span class="c m" style="left:427px;width:140px">$104,490</span>
<span class="c r" style="left:555.5px;width:140px">12,825</span>
<span class="c r" style="left:673.5px;width:140px">16,088</span>
<span class="c r" style="left:818px;width:140px">15,713</span>
<span class="c r" style="left:962px;width:140px">6,675</span>
<span class="c r" style="left:1106px;width:140px">15,506</span>
<span class="c r" style="left:1243px;width:140px">305,455</span>
<span class="c r" style="left:1371.5px;width:140px">152,728</span>
<span class="c r" style="left:1481px;width:140px">60,046</span>
<span class="c r" style="left:1591px;width:140px">504,657</span>
<span class="c m b" style="left:1742px;width:140px">86%</span>
</div>
<div class="rw" style="top:1436px;height:32px;line-height:32px">
<span class="c r" style="left:-10.5px;width:140px">340,331</span>
<span class="c r" style="left:135.5px;width:140px">453,774</span>
<span class="c m" style="left:289px;width:140px">$177,000</span>
<span class="c m" style="left:427px;width:140px">$110,513</span>
<span class="c r" style="left:555.5px;width:140px">9,375</span>
<span class="c r" style="left:673.5px;width:140px">9,450</span>
<span class="c r" style="left:818px;width:140px">12,113</span>
<span class="c r" style="left:962px;width:140px">7,088</span>
<span class="c r" style="left:1106px;width:140px">15,525</span>
<span class="c r" style="left:1243px;width:140px">444,444</span>
<span class="c r" style="left:1371.5px;width:140px">165,165</span>
<span class="c r" style="left:1481px;width:140px">63,528</span>
<span class="c r" style="left:1591px;width:140px">529,415</span>
<span class="c m b" style="left:1742px;width:140px">105%</span>
</div>
<div class="ph" style="left:2056px;top:218px;width:632px;height:68px"></div>
<div class="ht" style="left:2083.5px;top:218px;width:200px;height:68px"><span>Title</span></div>
<div class="ht" style="left:2443px;top:218px;width:200px;height:68px"><span>Details</span></div>
<div class="rr" style="top:284px;height:44px;line-height:44px"><span style="left:2070.7px">Website:</span><span style="left:2326.5px">www.other-levels.com</span></div>
<div class="rr" style="top:328px;height:32px;line-height:32px"><span style="left:2070.7px">HQ Location:</span><span style="left:2326.5px">Capital new administrative, Cairo, Egypt</span></div>
<div class="rr" style="top:360px;height:32px;line-height:32px"><span style="left:2070.7px">Number of Employees:</span><span style="left:2326.5px">3 Male, 4 Female</span></div>
<div class="rr" style="top:392px;height:32px;line-height:32px"><span style="left:2070.7px">Working Hours:</span><span style="left:2326.5px">10:00 am - 4:00pm</span></div>
<div class="rr" style="top:424px;height:32px;line-height:32px"><span style="left:2070.7px">Chief Executive Officer:</span><span style="left:2326.5px">Rovan H. Mohammed</span></div>
<div class="rr" style="top:456px;height:41px;line-height:41px"><span style="left:2062.4px">Website:</span><span style="left:2318px">www.other-levels.com</span></div>
<div class="rr" style="top:497px;height:33px;line-height:33px"><span style="left:2062.4px">Office Location:</span><span style="left:2318px">Heliopolis, Cairo, Egypt</span></div>
<div class="rr" style="top:530px;height:32px;line-height:32px"><span style="left:2062.4px">Number of Employees:</span><span style="left:2318px">6 Male, 1 Female</span></div>
<div class="rr" style="top:562px;height:32px;line-height:32px"><span style="left:2062.4px">Working hours:</span><span style="left:2318px">24 hours a day, seven days a week</span></div>
<div class="rr" style="top:594px;height:32px;line-height:32px"><span style="left:2062.4px">Web Dev. Director:</span><span style="left:2318px">Beyablo K. Mohammed</span></div>
<div class="rr" style="top:626px;height:42px;line-height:42px"><span style="left:2062.4px">Website:</span><span style="left:2318px">www.other-levels.shop</span></div>
<div class="rr" style="top:668px;height:32px;line-height:32px"><span style="left:2062.4px">Number of Branches</span><span style="left:2318px">32 Branch</span></div>
<div class="rr" style="top:700px;height:32px;line-height:32px"><span style="left:2062.4px">Number of Employees:</span><span style="left:2318px">54 Male, 24 Female</span></div>
<div class="rr" style="top:732px;height:32px;line-height:32px"><span style="left:2062.4px">Working hours:</span><span style="left:2318px">09:00 am - 11:00pm</span></div>
<div class="rr" style="top:764px;height:32px;line-height:32px"><span style="left:2062.4px">Web Dev. Director:</span><span style="left:2318px">Haidy A. Hossam</span></div>
<div class="td" style="left:2056px;top:454px;width:632px"></div>
<div class="td" style="left:2056px;top:624px;width:632px"></div>
<div class="td" style="left:2056px;top:794px;width:632px"></div>
<div class="vl" style="left:1932.7px;top:352.6px">Headquarter</div>
<div class="vl" style="left:1932.7px;top:522px">Web Store</div>
<div class="vl" style="left:1932.7px;top:693.5px">Branches</div>
</div>
<div id="rb">
<div class="bx" style="left:230px;top:80.4px;width:282px;height:46.8px"></div>
<div class="bx" style="left:515.8px;top:80.4px;width:108.2px;height:46.8px"></div>
<div class="bx" style="left:1282px;top:80px;width:310px;height:47.5px"></div>
<div class="btn" style="left:2323px;top:10px;width:192px;height:48px"></div>
<div class="btn" style="left:2535px;top:10px;width:133px;height:48px"></div>
<div style="position:absolute;left:22.1px;top:51.8px;width:76.1px;height:6.2px;border-radius:3.1px;background:#e0e0e0"></div>
<svg width="2688" height="212" viewBox="0 0 2688 212" style="position:absolute;left:0;top:0">
<line x1="209" y1="70" x2="209" y2="193.5" stroke="#505050" stroke-width="1.6"/>
<line x1="749" y1="70" x2="749" y2="193.5" stroke="#505050" stroke-width="1.6"/>
<line x1="1150.8" y1="70" x2="1150.8" y2="193.5" stroke="#505050" stroke-width="1.6"/>
<line x1="1261" y1="70" x2="1261" y2="193.5" stroke="#505050" stroke-width="1.6"/>
<line x1="1613" y1="70" x2="1613" y2="193.5" stroke="#505050" stroke-width="1.6"/>
<line x1="1978.9" y1="70" x2="1978.9" y2="193.5" stroke="#505050" stroke-width="1.6"/>
<line x1="2173" y1="70" x2="2173" y2="193.5" stroke="#505050" stroke-width="1.6"/>
<line x1="2482.9" y1="70" x2="2482.9" y2="193.5" stroke="#505050" stroke-width="1.6"/>
<path d="M72.8,103 V91.5 H37 V132.8 H58.5" fill="none" stroke="#f0a22e" stroke-width="6"/>
<path d="M43,94 V87.7 H49 A6.2,6.2 0 0 1 61,87.7 H67 V94 Z" fill="#2c2c2c" stroke="#b4b4b4" stroke-width="2" stroke-linejoin="round"/>
<rect x="61.5" y="105.2" width="25.5" height="33.2" fill="#2c2c2c" stroke="#e2e2e2" stroke-width="2.4"/>
<polyline points="99.2,106.7 103.9,111.1 108.6,106.7" fill="none" stroke="#fff" stroke-width="3.2" stroke-linecap="round" stroke-linejoin="round"/>
<path d="M136.6,77 L147,100.5 M147.6,77 L137.2,100.5" stroke="#d6d6d6" stroke-width="1.8" fill="none"/>
<circle cx="135.4" cy="104.2" r="3.1" fill="none" stroke="#4a9edb" stroke-width="2"/><circle cx="148.4" cy="104.2" r="3.1" fill="none" stroke="#4a9edb" stroke-width="2"/>
<path d="M139,147.5 H127 V121.3 H136.5 L140,124.5" fill="none" stroke="#d6d6d6" stroke-width="2"/>
<path d="M139.3,128.3 H150 L156.8,135 V150.6 H139.3 Z M150,128.3 V135 H156.8" fill="#2c2c2c" stroke="#d6d6d6" stroke-width="2" stroke-linejoin="round"/>
<path d="M144,140.5 H152.5 M144,144.8 H152.5" stroke="#a8a8a8" stroke-width="1.8"/>
<polyline points="171.4,134.3 176.2,138.8 180.9,134.3" fill="none" stroke="#fff" stroke-width="3.2" stroke-linecap="round" stroke-linejoin="round"/>
<g transform="translate(143.2,178.2) rotate(45) scale(0.86)"><rect x="-3" y="-20.5" width="6" height="12" rx="2.5" fill="#2c2c2c" stroke="#e8e8e8" stroke-width="1.8"/><rect x="-9" y="-9.5" width="18" height="7" rx="1.5" fill="#2c2c2c" stroke="#e8e8e8" stroke-width="1.8"/><path d="M-9,-2 L-11.5,13 L11.5,13 L9,-2 Z" fill="#2c2c2c" stroke="#f3c76a" stroke-width="1.8" stroke-linejoin="round"/><path d="M-10.6,7.5 L-11.5,13 L11.5,13 L10.6,7.5 Z" fill="#f0a22e"/></g>
<path d="M638,113.8 L649,88.8 L660,113.8 M642.2,104.6 H655.8" fill="none" stroke="#d6d6d6" stroke-width="2.2" stroke-linejoin="miter"/>
<polyline points="660.1,93.7 663.3,91.1 666.5,93.7" fill="none" stroke="#4a9edb" stroke-width="2.4" stroke-linecap="round" stroke-linejoin="round"/>
<path d="M693.5,113.8 L702.2,95.2 L711,113.8 M697,107 H707.5" fill="none" stroke="#d6d6d6" stroke-width="2.2"/>
<polyline points="711.9,91.1 715.2,93.7 718.5,91.1" fill="none" stroke="#4a9edb" stroke-width="2.4" stroke-linecap="round" stroke-linejoin="round"/>
<line x1="347.8" y1="178.8" x2="365.7" y2="178.8" stroke="#e0e0e0" stroke-width="2"/>
<polyline points="389.4,166.4 393.9,171.1 398.4,166.4" fill="none" stroke="#fff" stroke-width="3.2" stroke-linecap="round" stroke-linejoin="round"/>
<line x1="422.7" y1="149.7" x2="422.7" y2="185.5" stroke="#505050" stroke-width="1.6"/>
<line x1="528.7" y1="149.7" x2="528.7" y2="185.5" stroke="#505050" stroke-width="1.6"/>
<g stroke="#f2f2f2" stroke-width="2.2" stroke-dasharray="2.2,2.2" fill="none"><path d="M448,153.5 H478 M449.2,153.5 V180 M476.8,153.5 V180 M463,153.5 V180 M448,167 H478"/></g>
<line x1="448" y1="181" x2="478" y2="181" stroke="#f2f2f2" stroke-width="2.2"/>
<polyline points="495.2,166.4 499.9,171.1 504.6,166.4" fill="none" stroke="#fff" stroke-width="3.2" stroke-linecap="round" stroke-linejoin="round"/>
<path d="M570.5,158.5 L559.5,165.5 L567.5,174.5 L580,165.8 L571.5,157.5 V154.5 A2.3,2.3 0 0 1 576,154.5 V162" fill="none" stroke="#d6d6d6" stroke-width="2" stroke-linejoin="round"/>
<path d="M578,160.5 C581.5,160.5 583.5,166 582.3,172 C581.5,168 580.5,165.5 577,163.5 Z" fill="#8fc1ee"/>
<rect x="554" y="176" width="32" height="8" fill="#ffff00"/>
<polyline points="601.2,166.4 605.9,171.1 610.6,166.4" fill="none" stroke="#fff" stroke-width="3.2" stroke-linecap="round" stroke-linejoin="round"/>
<path d="M637.2,174 L646.6,152.5 L656,174 M640.6,166 H652.6" fill="none" stroke="#d6d6d6" stroke-width="2.2"/>
<rect x="630" y="176" width="32" height="8" fill="#ff0000"/>
<polyline points="677.4,166.4 682.1,171.1 686.8,166.4" fill="none" stroke="#fff" stroke-width="3.2" stroke-linecap="round" stroke-linejoin="round"/>
<polyline points="492.3,102.4 496.9,107.6 501.6,102.4" fill="none" stroke="#fff" stroke-width="3.2" stroke-linecap="round" stroke-linejoin="round"/>
<polyline points="604.4,102.4 609.0,107.6 613.6,102.4" fill="none" stroke="#fff" stroke-width="3.2" stroke-linecap="round" stroke-linejoin="round"/>
<rect x="874" y="80" width="48" height="47.7" rx="7" fill="#4c4c4c"/>
<line x1="780" y1="89" x2="808" y2="89" stroke="#e8e8e8" stroke-width="2"/>
<line x1="784" y1="97" x2="804" y2="97" stroke="#e8e8e8" stroke-width="2"/>
<line x1="780" y1="105" x2="808" y2="105" stroke="#e8e8e8" stroke-width="2"/>
<line x1="832" y1="95" x2="860" y2="95" stroke="#e8e8e8" stroke-width="2"/>
<line x1="836" y1="103" x2="856" y2="103" stroke="#e8e8e8" stroke-width="2"/>
<line x1="832" y1="111" x2="860" y2="111" stroke="#e8e8e8" stroke-width="2"/>
<line x1="884" y1="103" x2="912" y2="103" stroke="#e8e8e8" stroke-width="2"/>
<line x1="888" y1="111" x2="908" y2="111" stroke="#e8e8e8" stroke-width="2"/>
<line x1="884" y1="119" x2="912" y2="119" stroke="#e8e8e8" stroke-width="2"/>
<line x1="780" y1="155" x2="808" y2="155" stroke="#e8e8e8" stroke-width="2"/>
<line x1="780" y1="163" x2="800" y2="163" stroke="#e8e8e8" stroke-width="2"/>
<line x1="780" y1="171" x2="808" y2="171" stroke="#e8e8e8" stroke-width="2"/>
<line x1="780" y1="179" x2="800" y2="179" stroke="#e8e8e8" stroke-width="2"/>
<line x1="832" y1="155" x2="860" y2="155" stroke="#e8e8e8" stroke-width="2"/>
<line x1="836" y1="163" x2="856" y2="163" stroke="#e8e8e8" stroke-width="2"/>
<line x1="832" y1="171" x2="860" y2="171" stroke="#e8e8e8" stroke-width="2"/>
<line x1="836" y1="179" x2="856" y2="179" stroke="#e8e8e8" stroke-width="2"/>
<line x1="884" y1="155" x2="912" y2="155" stroke="#e8e8e8" stroke-width="2"/>
<line x1="892" y1="163" x2="912" y2="163" stroke="#e8e8e8" stroke-width="2"/>
<line x1="884" y1="171" x2="912" y2="171" stroke="#e8e8e8" stroke-width="2"/>
<line x1="892" y1="179" x2="912" y2="179" stroke="#e8e8e8" stroke-width="2"/>
<line x1="939" y1="86" x2="939" y2="121.6" stroke="#505050" stroke-width="1.6"/>
<line x1="939" y1="149.7" x2="939" y2="185.5" stroke="#505050" stroke-width="1.6"/>
<line x1="1045" y1="86" x2="1045" y2="121.6" stroke="#505050" stroke-width="1.6"/>
<text x="0" y="0" transform="translate(968.5,111.5) rotate(-42)" font-family="Liberation Sans" font-size="21" fill="#d6d6d6">ab</text>
<path d="M975.5,116.5 L995,97.5 M986.5,97 H995.5 V106" fill="none" stroke="#4a9edb" stroke-width="2.2"/>
<polyline points="1011.3,102.4 1016.0,107.2 1020.6,102.4" fill="none" stroke="#fff" stroke-width="3.2" stroke-linecap="round" stroke-linejoin="round"/>
<polyline points="1073.5,98.5 1080,104.3 1073.5,110" fill="none" stroke="#4a9edb" stroke-width="2.3"/>
<path d="M1090,96.8 H1097.8 M1090.8,96.8 V111.8 M1095.2,96.8 V111.8" stroke="#d6d6d6" stroke-width="1.9" fill="none"/><path d="M1090.5,96 A5,5 0 0 0 1090.5,106 Z" fill="#d6d6d6"/>
<polyline points="1117.2,102.4 1121.9,107.2 1126.6,102.4" fill="none" stroke="#fff" stroke-width="3.2" stroke-linecap="round" stroke-linejoin="round"/>
<line x1="965.8" y1="155" x2="994.0" y2="155" stroke="#e8e8e8" stroke-width="2"/>
<line x1="965.8" y1="179" x2="994.0" y2="179" stroke="#e8e8e8" stroke-width="2"/>
<line x1="982.0" y1="163" x2="994.0" y2="163" stroke="#e8e8e8" stroke-width="2"/>
<line x1="982.0" y1="171" x2="994.0" y2="171" stroke="#e8e8e8" stroke-width="2"/>
<path d="M966.5999999999999,167 H978.3 M971.3,162.3 L966.5999999999999,167 L971.3,171.7" fill="none" stroke="#4a9edb" stroke-width="2.2"/>
<line x1="1018" y1="155" x2="1046.2" y2="155" stroke="#e8e8e8" stroke-width="2"/>
<line x1="1018" y1="179" x2="1046.2" y2="179" stroke="#e8e8e8" stroke-width="2"/>
<line x1="1034.2" y1="163" x2="1046.2" y2="163" stroke="#e8e8e8" stroke-width="2"/>
<line x1="1034.2" y1="171" x2="1046.2" y2="171" stroke="#e8e8e8" stroke-width="2"/>
<path d="M1018,167 H1029.7 M1025,162.3 L1029.7,167 L1025,171.7" fill="none" stroke="#4a9edb" stroke-width="2.2"/>
<text x="1180" y="104" font-family="Liberation Sans" font-size="21" fill="#d6d6d6">ab</text>
<text x="1180" y="119" font-family="Liberation Sans" font-size="21" fill="#d6d6d6">c</text>
<path d="M1204,106 C1209.5,107 1209.5,114 1202.5,114 H1194 M1199.5,108.8 L1194,114 L1199.5,119.2" fill="none" stroke="#4a9edb" stroke-width="2.2"/>
<polyline points="1223.4,102.4 1228.3,107.4 1233.3,102.4" fill="none" stroke="#fff" stroke-width="3.2" stroke-linecap="round" stroke-linejoin="round"/>
<rect x="1177" y="153" width="28" height="27.6" fill="none" stroke="#d6d6d6" stroke-width="2"/>
<path d="M1191,153 V158.6 M1191,175 V180.6" stroke="#d6d6d6" stroke-width="2"/>
<rect x="1177" y="158.6" width="28" height="16.4" fill="#2c2c2c" stroke="#4a9edb" stroke-width="2"/>
<path d="M1181,166.8 H1201 M1185.2,162.6 L1181,166.8 L1185.2,171 M1196.8,162.6 L1201,166.8 L1196.8,171" fill="none" stroke="#4a9edb" stroke-width="2"/>
<polyline points="1223.4,166.7 1228.3,171.6 1233.3,166.7" fill="none" stroke="#fff" stroke-width="3.2" stroke-linecap="round" stroke-linejoin="round"/>
<polyline points="1572.2,102.4 1577.2,107.8 1582.1,102.4" fill="none" stroke="#fff" stroke-width="3.2" stroke-linecap="round" stroke-linejoin="round"/>
<polyline points="1337.1,166.7 1342.0,171.3 1346.9,166.7" fill="none" stroke="#fff" stroke-width="3.2" stroke-linecap="round" stroke-linejoin="round"/>
<path d="M1442.4,163.6 A6.9,6.9 0 1 0 1434.2,170.6 C1436.6,171.2 1436.4,174 1428.4,179.6 L1429.3,181.2 C1439.5,176.6 1443,170.6 1442.4,163.6 Z" fill="#d6d6d6"/>
<line x1="1474.8" y1="150.4" x2="1474.8" y2="185.8" stroke="#505050" stroke-width="1.6"/>
<text x="1520" y="166" font-family="Liberation Sans" font-size="17" fill="#d6d6d6">0</text><text x="1503.5" y="182.5" font-family="Liberation Sans" font-size="17" fill="#d6d6d6" textLength="27" lengthAdjust="spacingAndGlyphs">.00</text><circle cx="1516.8" cy="165" r="1.3" fill="#d6d6d6"/>
<path d="M1500.5,159.5 H1517 M1505.5,154.6 L1500.5,159.5 L1505.5,164.4" fill="none" stroke="#4a9edb" stroke-width="2.2"/>
<text x="1555.5" y="166" font-family="Liberation Sans" font-size="17" fill="#d6d6d6" textLength="27" lengthAdjust="spacingAndGlyphs">.00</text><text x="1567.5" y="182.5" font-family="Liberation Sans" font-size="17" fill="#d6d6d6" textLength="15" lengthAdjust="spacingAndGlyphs">.0</text>
<path d="M1552,175.2 H1568.5 M1563.5,170.3 L1568.5,175.2 L1563.5,180.1" fill="none" stroke="#4a9edb" stroke-width="2.2"/>
<g stroke="#c6c6c6" stroke-width="2" fill="none"><rect x="1655" y="87" width="54.200000000000045" height="42"/><path d="M1655,101 H1709.2 M1655,115 H1709.2 M1664,87 V129 M1690.5,87 V129 M1699.5,87 V129"/></g>
<rect x="1664" y="86.5" width="26" height="14" fill="#b6302c"/>
<rect x="1664" y="102" width="17.5" height="12" fill="#2f7fcf"/>
<rect x="1664" y="115.5" width="30" height="14" fill="#b6302c"/>
<polyline points="1725.4,106.4 1730.0,110.6 1734.5,106.4" fill="none" stroke="#fff" stroke-width="3.2" stroke-linecap="round" stroke-linejoin="round"/>
<g stroke="#c6c6c6" stroke-width="2" fill="none"><rect x="1770" y="87" width="53.700000000000045" height="42"/><path d="M1770,101 H1823.7 M1770,115 H1823.7 M1788,87 V129 M1806,87 V129"/></g>
<rect x="1788" y="101" width="36.2" height="28.5" fill="#1268c3" stroke="#5db9f5" stroke-width="2"/><path d="M1788,115 H1824 M1806,101 V129.5" stroke="#5db9f5" stroke-width="2"/>
<g transform="translate(1784,137.6)"><path d="M19,-14 C26,-24 38,-34 43.5,-36.5 C45.5,-36.5 45.5,-34.5 44.5,-33 C40,-26 30,-15 23.5,-9.5 Z" fill="#2c2c2c" stroke="#dcdcdc" stroke-width="2" stroke-linejoin="round"/><path d="M0,-1.5 C5,-2 7,-5 8.5,-9 C10.5,-14 16,-15.5 20,-12.5 C24,-9 23,-3.5 19,-0.5 C14,3 6,2.5 0,-1.5 Z" fill="#1268c3" stroke="#5db9f5" stroke-width="1.8" stroke-linejoin="round"/></g>
<polyline points="1840.4,106.4 1844.9,110.6 1849.4,106.4" fill="none" stroke="#fff" stroke-width="3.2" stroke-linecap="round" stroke-linejoin="round"/>
<g stroke="#c6c6c6" stroke-width="2" fill="none"><rect x="1870" y="87" width="53.5" height="42"/><path d="M1870,96.5 H1923.5 M1870,119.5 H1923.5 M1879.5,87 V129 M1915,87 V129"/></g>
<rect x="1879.5" y="96.5" width="35.5" height="23" fill="#1268c3" stroke="#5db9f5" stroke-width="2"/>
<g transform="translate(1884,137.6)"><path d="M19,-14 C26,-24 38,-34 43.5,-36.5 C45.5,-36.5 45.5,-34.5 44.5,-33 C40,-26 30,-15 23.5,-9.5 Z" fill="#2c2c2c" stroke="#dcdcdc" stroke-width="2" stroke-linejoin="round"/><path d="M0,-1.5 C5,-2 7,-5 8.5,-9 C10.5,-14 16,-15.5 20,-12.5 C24,-9 23,-3.5 19,-0.5 C14,3 6,2.5 0,-1.5 Z" fill="#1268c3" stroke="#5db9f5" stroke-width="1.8" stroke-linejoin="round"/></g>
<polyline points="1940.4,106.4 1945.0,110.6 1949.6,106.4" fill="none" stroke="#fff" stroke-width="3.2" stroke-linecap="round" stroke-linejoin="round"/>
<g stroke="#dadada" stroke-width="2" fill="none"><rect x="2006" y="79.3" width="30" height="25.5"/><path d="M2006,87.5 H2036 M2006,97 H2036 M2016,79.3 V104.8 M2026,79.3 V104.8"/></g>
<rect x="2016" y="87.5" width="20" height="9.5" fill="#1268c3" stroke="#5db9f5" stroke-width="2"/><path d="M2026,87.5 V97" stroke="#5db9f5" stroke-width="2"/>
<path d="M2005,92.2 H2019 M2010.3,87 L2005,92.2 L2010.3,97.4" fill="none" stroke="#4a9edb" stroke-width="2.2"/>
<polyline points="2120.4,90.4 2124.8,94.6 2129.3,90.4" fill="none" stroke="#fff" stroke-width="3.2" stroke-linecap="round" stroke-linejoin="round"/>
<g stroke="#dadada" stroke-width="2" fill="none"><path d="M2036,123 H2006 V148.8 H2036 M2006,131 H2036 M2006,141 H2036 M2016,123 V131 M2026,123 V131 M2016,141 V148.8 M2026,141 V148.8" stroke-dasharray="none"/></g>
<rect x="2011.5" y="130.5" width="11" height="11" rx="2" fill="#1268c3" stroke="#5db9f5" stroke-width="2"/>
<path d="M2027,131 L2036.5,141 M2036.5,131 L2027,141" stroke="#e0564a" stroke-width="2.2" fill="none"/>
<polyline points="2128.4,134.4 2133.0,138.6 2137.6,134.4" fill="none" stroke="#fff" stroke-width="3.2" stroke-linecap="round" stroke-linejoin="round"/>
<g stroke="#dadada" stroke-width="2" fill="none"><path d="M2006,168.5 V194.8 H2036 V168.5 M2006,176.5 H2036 M2006,186.5 H2036 M2014,171 V194.8 M2028,171 V194.8"/></g>
<rect x="2014" y="176.5" width="14" height="10" fill="#1268c3" stroke="#5db9f5" stroke-width="2"/>
<path d="M2011.5,167 H2030.5 M2011.5,164.3 V169.7 M2030.5,164.3 V169.7" stroke="#4a9edb" stroke-width="2" fill="none"/>
<polyline points="2134.4,178.2 2138.8,182.6 2143.3,178.2" fill="none" stroke="#fff" stroke-width="3.2" stroke-linecap="round" stroke-linejoin="round"/>
<path d="M2226,84 V79.5 H2204.5 L2216.5,92 L2204.5,104.7 H2226 V100" fill="none" stroke="#dadada" stroke-width="2.1" stroke-linejoin="miter"/>
<polyline points="2244.7,90.4 2249.2,94.6 2253.6,90.4" fill="none" stroke="#fff" stroke-width="3.2" stroke-linecap="round" stroke-linejoin="round"/>
<rect x="2200" y="123" width="30" height="25.8" fill="none" stroke="#dadada" stroke-width="2"/><path d="M2200,128 H2230" stroke="#dadada" stroke-width="2"/>
<path d="M2215,132 V144.5 M2209.3,139 L2215,144.8 L2220.7,139" fill="none" stroke="#4a9edb" stroke-width="2.2"/>
<polyline points="2244.7,134.4 2249.2,138.6 2253.6,134.4" fill="none" stroke="#fff" stroke-width="3.2" stroke-linecap="round" stroke-linejoin="round"/>
<g transform="translate(2214.5,180) rotate(-40) scale(0.82)"><rect x="-16" y="-8.5" width="32" height="17" fill="#2c2c2c" stroke="#d9a3e6" stroke-width="2"/><rect x="-16" y="-8.5" width="12" height="17" fill="#a63bb8" stroke="#d9a3e6" stroke-width="2"/></g>
<polyline points="2244.7,178.2 2249.2,182.6 2253.6,178.2" fill="none" stroke="#fff" stroke-width="3.2" stroke-linecap="round" stroke-linejoin="round"/>
<path d="M2273.5,105.5 L2283,82.5 L2292.5,105.5 M2277,97.3 H2289" fill="none" stroke="#4a9edb" stroke-width="2.2"/>
<path d="M2274.5,111.5 H2289.5 L2274.5,132.8 H2290.5" fill="none" stroke="#dadada" stroke-width="2.1"/>
<path d="M2298,95.5 H2328 L2316.5,110 V124.3 H2309.5 V110 Z" fill="none" stroke="#dadada" stroke-width="2" stroke-linejoin="miter"/>
<polyline points="2344.8,106.7 2349.2,111.1 2353.6,106.7" fill="none" stroke="#fff" stroke-width="3.2" stroke-linecap="round" stroke-linejoin="round"/>
<circle cx="2408" cy="101" r="19.8" fill="none" stroke="#dadada" stroke-width="2"/><path d="M2393.5,115.5 L2372.5,137" stroke="#dadada" stroke-width="2.2" stroke-linecap="round"/>
<polyline points="2444.4,106.7 2449.0,111.1 2453.6,106.7" fill="none" stroke="#fff" stroke-width="3.2" stroke-linecap="round" stroke-linejoin="round"/>
<g stroke="#bdbdbd" stroke-width="2" fill="none"><rect x="2516" y="77" width="62" height="62"/><path d="M2516,104 H2578 M2516,120 H2578 M2536.5,120 V139 M2557.5,120 V139"/></g>
<rect x="2517" y="78" width="60" height="6.5" fill="#6e6e6e"/><path d="M2516,85 H2578" stroke="#bdbdbd" stroke-width="2"/>
<circle cx="2544.5" cy="102.5" r="19.5" fill="#2c2c2c" stroke="#d4d4d4" stroke-width="2.4"/>
<rect x="2533" y="99.5" width="7" height="12" fill="#7a7a7a"/><rect x="2540" y="90.5" width="8" height="21" fill="#dcdcdc"/>
<rect x="2549" y="95" width="6" height="16.5" fill="#1268c3" stroke="#5db9f5" stroke-width="1.6"/>
<path d="M2558.5,117 L2578,138.5" stroke="#d4d4d4" stroke-width="3"/>
<path d="M2342,23.5 H2364 V39 H2353 L2348,44.5 V39 H2342 Z" fill="none" stroke="#d9d9d9" stroke-width="2.2" stroke-linejoin="round"/>
<path d="M2554,32 V44.5 H2572 V40" fill="none" stroke="#d9d9d9" stroke-width="2.2"/>
<path d="M2558,39 C2558.5,32.5 2562.5,29.5 2568.5,29.5 V24.5 L2576,31.8 L2568.5,39 V34 C2563.5,34 2560.5,35.5 2558,39 Z" fill="none" stroke="#d9d9d9" stroke-width="2" stroke-linejoin="round"/>
<path d="M1268.5,35.5 C1268.5,33 1263.5,30.5 1263.5,25.5 A9.3,9.3 0 0 1 1282.1,25.5 C1282.1,30.5 1277.3,33 1277.3,35.5 Z" fill="none" stroke="#d6d6d6" stroke-width="2" stroke-linejoin="round"/><path d="M1268.5,39.3 H1277.3 M1269.8,43 H1276" stroke="#d6d6d6" stroke-width="2" fill="none"/>
</svg>
<div class="rt" style="left:23.3px;top:17.6px;font-size:26px;font-weight:bold;color:#e6e6e6;letter-spacing:0.55px;">Home</div>
<div class="rt" style="left:145.0px;top:17.6px;font-size:26px;font-weight:bold;color:#dedede;letter-spacing:-0.16px;">Insert</div>
<div class="rt" style="left:267.0px;top:17.6px;font-size:26px;font-weight:bold;color:#dedede;letter-spacing:-0.86px;">Draw</div>
<div class="rt" style="left:379.0px;top:17.6px;font-size:26px;font-weight:bold;color:#dedede;letter-spacing:-0.36px;">Page Layout</div>
<div class="rt" style="left:583.5px;top:17.6px;font-size:26px;font-weight:bold;color:#dedede;letter-spacing:-0.65px;">Formulas</div>
<div class="rt" style="left:749.0px;top:17.6px;font-size:26px;font-weight:bold;color:#dedede;letter-spacing:-0.12px;">Data</div>
<div class="rt" style="left:853.0px;top:17.6px;font-size:26px;font-weight:bold;color:#dedede;letter-spacing:-0.58px;">Review</div>
<div class="rt" style="left:989.5px;top:17.6px;font-size:26px;font-weight:bold;color:#dedede;letter-spacing:-0.16px;">View</div>
<div class="rt" style="left:1099.4px;top:17.6px;font-size:26px;font-weight:bold;color:#dedede;letter-spacing:-0.18px;">Developer</div>
<div class="rt" style="left:1303.0px;top:17.6px;font-size:26px;font-weight:bold;color:#dedede;letter-spacing:-0.44px;">Tell me</div>
<div class="rt" style="left:2375.7px;top:23.2px;font-size:24px;font-weight:bold;color:#ececec;letter-spacing:0.18px;">Comments</div>
<div class="rt" style="left:2587.7px;top:23.2px;font-size:24px;font-weight:bold;color:#ececec;letter-spacing:0.02px;">Share</div>
<div class="rt" style="left:40.8px;top:149.8px;font-size:21px;font-weight:normal;color:#fff;letter-spacing:0.13px;-webkit-text-stroke:0.5px #fff;">Paste</div>
<div class="rt" style="left:242.6px;top:91.2px;font-size:24.5px;font-weight:normal;color:#fff;letter-spacing:0.28px;-webkit-text-stroke:0.4px #fff;">Calibri (Body)</div>
<div class="rt" style="left:528.2px;top:91.2px;font-size:24.5px;font-weight:normal;color:#fff;letter-spacing:0.00px;-webkit-text-stroke:0.4px #fff;transform:scaleX(0.88);transform-origin:0 0;">12</div>
<div class="rt" style="left:1294.7px;top:91.1px;font-size:24.5px;font-weight:normal;color:#fff;letter-spacing:-0.19px;-webkit-text-stroke:0.4px #fff;">General</div>
<div class="rt" style="left:247.8px;top:152.5px;font-size:27px;font-weight:bold;color:#dcdcdc;letter-spacing:0.00px;">B</div>
<div class="rt" style="left:299px;top:150.9px;font-size:29px;font-family:'Liberation Serif',serif;font-style:italic;color:#dcdcdc">I</div>
<div class="rt" style="left:347.3px;top:153.0px;font-size:25.5px;font-weight:normal;color:#dcdcdc;letter-spacing:0.00px;">U</div>
<div class="rt" style="left:1296.0px;top:152.1px;font-size:33px;font-weight:normal;color:#d6d6d6;letter-spacing:0.00px;transform:scaleX(0.82);transform-origin:0 0;">$</div>
<div class="rt" style="left:1366.0px;top:149.4px;font-size:38px;font-weight:normal;color:#d6d6d6;letter-spacing:0.00px;transform:scaleX(0.92);transform-origin:0 0;">%</div>
<div class="rt" style="left:1638.8px;top:149.7px;font-size:21px;font-weight:normal;color:#fff;letter-spacing:0.71px;-webkit-text-stroke:0.5px #fff;">Conditional</div>
<div class="rt" style="left:1640.7px;top:174.2px;font-size:21px;font-weight:normal;color:#fff;letter-spacing:0.86px;-webkit-text-stroke:0.5px #fff;">Formatting</div>
<div class="rt" style="left:1773.0px;top:149.7px;font-size:21px;font-weight:normal;color:#fff;letter-spacing:0.70px;-webkit-text-stroke:0.5px #fff;">Format</div>
<div class="rt" style="left:1767.7px;top:174.2px;font-size:21px;font-weight:normal;color:#fff;letter-spacing:0.47px;-webkit-text-stroke:0.5px #fff;">as Table</div>
<div class="rt" style="left:1889.0px;top:149.7px;font-size:21px;font-weight:normal;color:#fff;letter-spacing:0.21px;-webkit-text-stroke:0.5px #fff;">Cell</div>
<div class="rt" style="left:1878.0px;top:174.2px;font-size:21px;font-weight:normal;color:#fff;letter-spacing:0.50px;-webkit-text-stroke:0.5px #fff;">Styles</div>
<div class="rt" style="left:2050.0px;top:81.8px;font-size:21px;font-weight:normal;color:#fff;letter-spacing:0.62px;-webkit-text-stroke:0.5px #fff;">Insert</div>
<div class="rt" style="left:2050.0px;top:125.7px;font-size:21px;font-weight:normal;color:#fff;letter-spacing:0.36px;-webkit-text-stroke:0.5px #fff;">Delete</div>
<div class="rt" style="left:2050.0px;top:169.8px;font-size:21px;font-weight:normal;color:#fff;letter-spacing:0.50px;-webkit-text-stroke:0.5px #fff;">Format</div>
<div class="rt" style="left:2281.6px;top:149.7px;font-size:21px;font-weight:normal;color:#fff;letter-spacing:0.69px;-webkit-text-stroke:0.5px #fff;">Sort &amp;</div>
<div class="rt" style="left:2287.5px;top:174.2px;font-size:21px;font-weight:normal;color:#fff;letter-spacing:0.77px;-webkit-text-stroke:0.5px #fff;">Filter</div>
<div class="rt" style="left:2379.6px;top:149.7px;font-size:21px;font-weight:normal;color:#fff;letter-spacing:0.44px;-webkit-text-stroke:0.5px #fff;">Find &amp;</div>
<div class="rt" style="left:2379.6px;top:174.2px;font-size:21px;font-weight:normal;color:#fff;letter-spacing:0.75px;-webkit-text-stroke:0.5px #fff;">Select</div>
<div class="rt" style="left:2507.7px;top:149.7px;font-size:21px;font-weight:normal;color:#fff;letter-spacing:0.41px;-webkit-text-stroke:0.5px #fff;">Analyze</div>
<div class="rt" style="left:2524.0px;top:174.2px;font-size:21px;font-weight:normal;color:#fff;letter-spacing:0.15px;-webkit-text-stroke:0.5px #fff;">Data</div>
</div>
<div class="wm" style="left:-214.7px;top:364.9px;transform:rotate(-37deg)">www.other-levels.com</div>
<div class="wm" style="left:802.7px;top:579.2px;transform:rotate(-37deg)">www.other-levels.com</div>
<div class="wm" style="left:1547.5px;top:449.5px;transform:rotate(-37deg)">www.other-levels.com</div>
<div class="wm" style="left:-213.9px;top:1023.5px;transform:rotate(-37deg)">www.other-levels.com</div>
<div class="wm" style="left:745.6px;top:1318.5px;transform:rotate(-37deg)">www.other-levels.com</div>
<div class="wm" style="left:1733.2px;top:1125.8px;transform:rotate(-37deg)">www.other-levels.com</div>
<div class="wm" style="left:1700.0px;top:1558.0px;transform:rotate(-37deg)">www.other-levels.com</div>
<div class="big" style="left:1396px;top:1032.5px">Clear Dataset</div>
<div class="big" style="left:1394.5px;top:1196.5px">and Easy to update</div>
</div>
</body></html>
